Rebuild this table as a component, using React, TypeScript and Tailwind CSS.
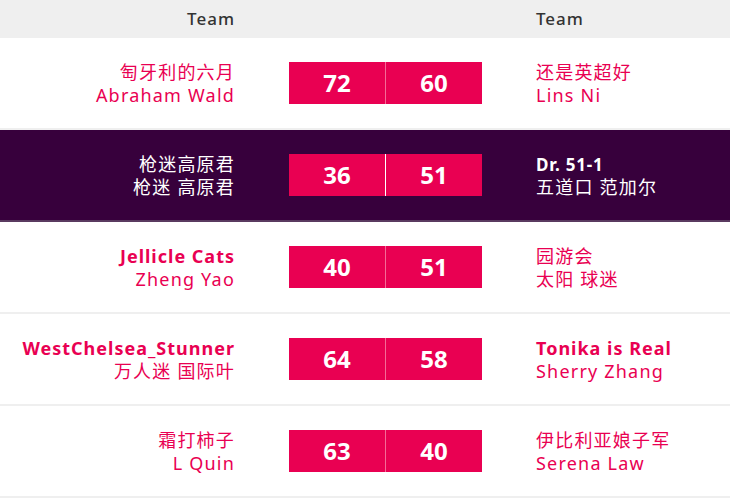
import React from "react";

type Side = { top: string; bottom: string; topBold?: boolean };
type Row = { left: Side; right: Side; s1: number; s2: number; dark?: boolean };

const rows: Row[] = [
  { left: { top: "匋牙利的六月", bottom: "Abraham Wald" }, right: { top: "还是英超好", bottom: "Lins Ni" }, s1: 72, s2: 60 },
  { left: { top: "枪迷高原君", bottom: "枪迷 高原君" }, right: { top: "Dr. 51-1", bottom: "五道口 范加尔", topBold: true }, s1: 36, s2: 51, dark: true },
  { left: { top: "Jellicle Cats", bottom: "Zheng Yao", topBold: true }, right: { top: "园游会", bottom: "太阳 球迷" }, s1: 40, s2: 51 },
  { left: { top: "WestChelsea_Stunner", bottom: "万人迷 国际叶", topBold: true }, right: { top: "Tonika is Real", bottom: "Sherry Zhang", topBold: true }, s1: 64, s2: 58 },
  { left: { top: "霜打柿子", bottom: "L Quin" }, right: { top: "伊比利亚娘子军", bottom: "Serena Law" }, s1: 63, s2: 40 },
];

const font = { fontFamily: '"Noto Sans", "Noto Sans CJK SC", sans-serif' };

function Name({ side, align, dark }: { side: Side; align: "left" | "right"; dark?: boolean }) {
  const color = dark ? "text-white" : "text-[#e90052]";
  const boldCls = dark ? "text-[17px] font-bold leading-[23px] tracking-[0.8px]" : "text-[18px] font-bold leading-[23px] tracking-[1px]";
  return (
    <div className={`flex flex-col pt-[2px] ${align === "right" ? "items-end text-right" : "items-start text-left"} ${color}`}>
      <div className={side.topBold ? boldCls : "text-[18px] leading-[23px] tracking-[1.2px]"}>{side.top}</div>
      <div className="text-[18px] leading-[23px] tracking-[1.2px]">{side.bottom}</div>
    </div>
  );
}

export default function App() {
  return (
    <div className="w-[730px] h-[500px] bg-white overflow-hidden" style={font}>
      <div className="grid grid-cols-[235px_193px_1fr] gap-x-[54px] h-[38px] items-center bg-[#efefef] text-[17px] font-medium tracking-[1px] text-[#333]">
        <div className="text-right">Team</div>
        <div />
        <div>Team</div>
      </div>
      {rows.map((r, i) => (
        <div
          key={i}
          className={`grid grid-cols-[235px_193px_1fr] gap-x-[54px] h-[92px] items-center border-b-2 ${r.dark ? "bg-[#37003c] border-[#5a3a60]" : "bg-white border-[#efefef]"}`}
        >
          <Name side={r.left} align="right" dark={r.dark} />
          <div className="flex h-[42px] bg-[#e90052] text-white text-[24px] font-bold">
            <div className="flex-1 flex items-center justify-center">{r.s1}</div>
            <div className={`w-px ${r.dark ? "bg-white" : "bg-[#f46a96]"}`} />
            <div className="flex-1 flex items-center justify-center">{r.s2}</div>
          </div>
          <Name side={r.right} align="left" dark={r.dark} />
        </div>
      ))}
    </div>
  );
}
